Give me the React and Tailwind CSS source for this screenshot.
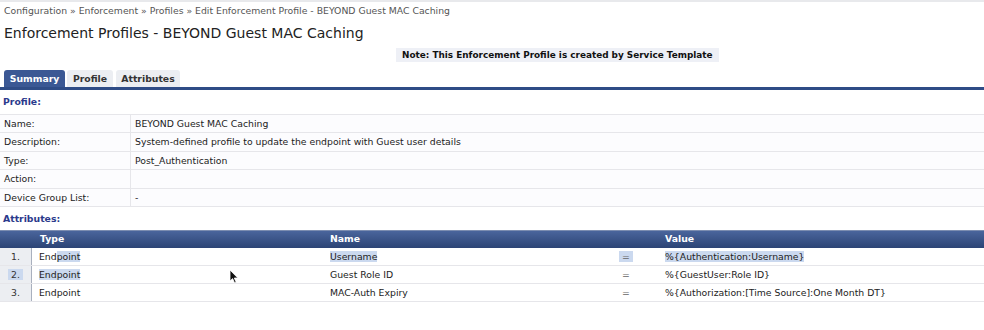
import React from "react";

/* ===== DATA ===== */
const profileRows = [
    { label: "Name:", value: "BEYOND Guest MAC Caching" },
    { label: "Description:", value: "System-defined profile to update the endpoint with Guest user details" },
    { label: "Type:", value: "Post_Authentication" },
    { label: "Action:", value: "" },
    { label: "Device Group List:", value: "-" },
];

const Sel = ({ children }) => (
    <span className="bg-[#cbd9ef]">{children}</span>
);

const Cursor = () => (
    <svg
        className="absolute left-[229px] top-[269px]"
        width="10"
        height="15"
        viewBox="0 0 10 15"
    >
        <path
            d="M1 1 L1 12 L3.6 9.6 L5.6 14 L7.2 13.3 L5.3 9 L8.8 9 Z"
            fill="#111"
            stroke="#fff"
            strokeWidth="0.8"
        />
    </svg>
);

const App = () => {
    return (
        <div className="relative w-[984px] h-[330px] bg-white overflow-hidden font-['DejaVu_Sans',sans-serif] text-[9.3px] text-[#222]">
            <div className="h-[2px] bg-[#e8e9ec]" />

            {/* BREADCRUMB */}
            <div className="px-[4px] pt-[1px] h-[18px] text-[#555] leading-[16px]">
                Configuration » Enforcement » Profiles » Edit Enforcement Profile - BEYOND Guest MAC Caching
            </div>

            {/* TITLE */}
            <h1 className="px-[4px] text-[14px] leading-[26px] text-[#222]">
                Enforcement Profiles - BEYOND Guest MAC Caching
            </h1>

            {/* NOTE */}
            <div className="flex h-[24px] items-start pt-[2px] pl-[396px]">
                <span className="bg-[#eef0f6] px-[6px] leading-[14px] text-[8.9px] font-bold text-[#111]">
                    Note: This Enforcement Profile is created by Service Template
                </span>
            </div>

            {/* TABS */}
            <div className="flex items-end gap-[2px] px-[4px] h-[17px] border-b-[3px] border-[#2f4c86] box-content">
                <div className="h-[17px] w-[61px] rounded-t-[3px] bg-[#3b5894] text-white font-bold flex items-center justify-center">
                    Summary
                </div>
                <div className="h-[17px] w-[46px] rounded-t-[3px] bg-[#eceef2] text-[#333] font-bold flex items-center justify-center">
                    Profile
                </div>
                <div className="ml-[1px] h-[17px] w-[64px] rounded-t-[3px] bg-[#eceef2] text-[#333] font-bold flex items-center justify-center">
                    Attributes
                </div>
            </div>

            {/* PROFILE */}
            <div className="px-[3px] pt-[4px] h-[24px] font-bold text-[#2b3a8c] leading-[16px]">
                Profile:
            </div>
            <div className="border-t border-[#e6e6ea]">
                {profileRows.map((row) => (
                    <div
                        key={row.label}
                        className="flex h-[18.4px] bg-[#fcfcfe] border-b border-[#e6e6ea] leading-[17px]"
                    >
                        <div className="w-[131px] pl-[4px] border-r border-[#e6e6ea]">
                            {row.label}
                        </div>
                        <div className="pl-[4px]">{row.value}</div>
                    </div>
                ))}
            </div>

            {/* ATTRIBUTES */}
            <div className="px-[3px] pt-[4px] h-[23px] font-bold text-[#2b3a8c] leading-[16px]">
                Attributes:
            </div>
            <div className="flex h-[18px] items-center bg-gradient-to-b from-[#4a659c] to-[#2c4475] border-t border-[#7c8db0] text-white font-bold">
                <div className="w-[40px]" />
                <div className="w-[290px]">Type</div>
                <div className="w-[335px]">Name</div>
                <div>Value</div>
            </div>

            {[
                {
                    n: "1.",
                    type: <>End<Sel>point</Sel></>,
                    name: <Sel>Username</Sel>,
                    eq: <Sel>&nbsp;=&nbsp;</Sel>,
                    value: <Sel>%{"{"}Authentication:Username{"}"}</Sel>,
                },
                {
                    n: <Sel>&nbsp;2.&nbsp;</Sel>,
                    type: <Sel>Endpoint</Sel>,
                    name: "Guest Role ID",
                    eq: <>&nbsp;=&nbsp;</>,
                    value: "%{GuestUser:Role ID}",
                },
                {
                    n: "3.",
                    type: "Endpoint",
                    name: "MAC-Auth Expiry",
                    eq: <>&nbsp;=&nbsp;</>,
                    value: "%{Authorization:[Time Source]:One Month DT}",
                },
            ].map((row, i) => (
                <div
                    key={i}
                    className="flex h-[18px] border-b border-[#e6e6ea] leading-[17px]"
                >
                    <div className="w-[32px] bg-[#eceef2] border-r border-[#a9b0be] text-center text-[#333]">
                        {row.n}
                    </div>
                    <div className="w-[298px] pl-[7px]">{row.type}</div>
                    <div className="w-[289px]">{row.name}</div>
                    <div className="w-[46px] text-[#666]">{row.eq}</div>
                    <div>{row.value}</div>
                </div>
            ))}

            <Cursor />
        </div>
    );
};

export default App;
